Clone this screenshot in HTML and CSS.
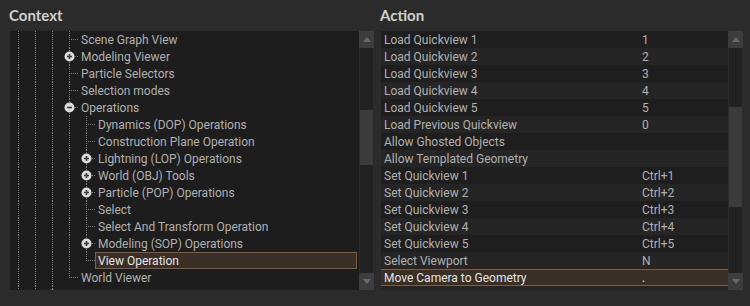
FILE: index.html
```html
<!DOCTYPE html>
<html lang="en">
<head>
    <meta charset="UTF-8">
    <title>Hotkeys - Context / Action</title>
    <link rel="stylesheet" href="styles.css">
</head>
<body>

<div class="panes">

    <!-- Context tree -->
    <section class="pane pane-context">
        <h2 class="pane-title">Context</h2>
        <div class="box">
            <div class="tree">
                <div class="row"><span class="g g-line"></span><span class="g g-line"></span><span class="g g-line"></span><span class="g g-tee"></span><span class="label">Scene Graph View</span></div>
                <div class="row"><span class="g g-line"></span><span class="g g-line"></span><span class="g g-line"></span><span class="g g-tee"><svg class="toggle" viewBox="0 0 11 11"><circle cx="5.5" cy="5.5" r="5" fill="#dcdcdc"/><path d="M3 5.5h5M5.5 3v5" stroke="#3a3a3a" stroke-width="1.6"/></svg></span><span class="label">Modeling Viewer</span></div>
                <div class="row"><span class="g g-line"></span><span class="g g-line"></span><span class="g g-line"></span><span class="g g-tee"></span><span class="label">Particle Selectors</span></div>
                <div class="row"><span class="g g-line"></span><span class="g g-line"></span><span class="g g-line"></span><span class="g g-tee"></span><span class="label">Selection modes</span></div>
                <div class="row"><span class="g g-line"></span><span class="g g-line"></span><span class="g g-line"></span><span class="g g-tee"><svg class="toggle" viewBox="0 0 11 11"><circle cx="5.5" cy="5.5" r="5" fill="#dcdcdc"/><path d="M3 5.5h5" stroke="#3a3a3a" stroke-width="1.6"/></svg></span><span class="label">Operations</span></div>
                <div class="row"><span class="g g-line"></span><span class="g g-line"></span><span class="g g-line"></span><span class="g g-line"></span><span class="g g-tee"></span><span class="label">Dynamics (DOP) Operations</span></div>
                <div class="row"><span class="g g-line"></span><span class="g g-line"></span><span class="g g-line"></span><span class="g g-line"></span><span class="g g-tee"></span><span class="label">Construction Plane Operation</span></div>
                <div class="row"><span class="g g-line"></span><span class="g g-line"></span><span class="g g-line"></span><span class="g g-line"></span><span class="g g-tee"><svg class="toggle" viewBox="0 0 11 11"><circle cx="5.5" cy="5.5" r="5" fill="#dcdcdc"/><path d="M3 5.5h5M5.5 3v5" stroke="#3a3a3a" stroke-width="1.6"/></svg></span><span class="label">Lightning (LOP) Operations</span></div>
                <div class="row"><span class="g g-line"></span><span class="g g-line"></span><span class="g g-line"></span><span class="g g-line"></span><span class="g g-tee"><svg class="toggle" viewBox="0 0 11 11"><circle cx="5.5" cy="5.5" r="5" fill="#dcdcdc"/><path d="M3 5.5h5M5.5 3v5" stroke="#3a3a3a" stroke-width="1.6"/></svg></span><span class="label">World (OBJ) Tools</span></div>
                <div class="row"><span class="g g-line"></span><span class="g g-line"></span><span class="g g-line"></span><span class="g g-line"></span><span class="g g-tee"><svg class="toggle" viewBox="0 0 11 11"><circle cx="5.5" cy="5.5" r="5" fill="#dcdcdc"/><path d="M3 5.5h5M5.5 3v5" stroke="#3a3a3a" stroke-width="1.6"/></svg></span><span class="label">Particle (POP) Operations</span></div>
                <div class="row"><span class="g g-line"></span><span class="g g-line"></span><span class="g g-line"></span><span class="g g-line"></span><span class="g g-tee"></span><span class="label">Select</span></div>
                <div class="row"><span class="g g-line"></span><span class="g g-line"></span><span class="g g-line"></span><span class="g g-line"></span><span class="g g-tee"></span><span class="label">Select And Transform Operation</span></div>
                <div class="row"><span class="g g-line"></span><span class="g g-line"></span><span class="g g-line"></span><span class="g g-line"></span><span class="g g-tee"><svg class="toggle" viewBox="0 0 11 11"><circle cx="5.5" cy="5.5" r="5" fill="#dcdcdc"/><path d="M3 5.5h5M5.5 3v5" stroke="#3a3a3a" stroke-width="1.6"/></svg></span><span class="label">Modeling (SOP) Operations</span></div>
                <div class="row"><span class="g g-line"></span><span class="g g-line"></span><span class="g g-line"></span><span class="g g-line"></span><span class="g g-end"></span><span class="label selected">View Operation</span></div>
                <div class="row"><span class="g g-line"></span><span class="g g-line"></span><span class="g g-line"></span><span class="g g-end"></span><span class="label">World Viewer</span></div>
                <div class="row"><span class="g g-line"></span><span class="g g-line"></span><span class="g g-tee"><svg class="toggle" viewBox="0 0 11 11"><circle cx="5.5" cy="5.5" r="5" fill="#dcdcdc"/><path d="M3 5.5h5M5.5 3v5" stroke="#3a3a3a" stroke-width="1.6"/></svg></span><span class="label">Lop Viewer</span></div>
            </div>
            <div class="scrollbar">
                <div class="sb-btn"><span class="arrow-up"></span></div>
                <div class="sb-track">
                    <div class="sb-gap ctx-before"></div>
                    <div class="sb-thumb ctx-thumb"></div>
                    <div class="sb-gap sb-rest"></div>
                </div>
                <div class="sb-btn"><span class="arrow-down"></span></div>
            </div>
        </div>
    </section>

    <!-- Action list -->
    <section class="pane pane-action">
        <h2 class="pane-title">Action</h2>
        <div class="box">
            <div class="list">
                <div class="item"><span class="name">Load Quickview 1</span><span class="key">1</span></div>
                <div class="item"><span class="name">Load Quickview 2</span><span class="key">2</span></div>
                <div class="item"><span class="name">Load Quickview 3</span><span class="key">3</span></div>
                <div class="item"><span class="name">Load Quickview 4</span><span class="key">4</span></div>
                <div class="item"><span class="name">Load Quickview 5</span><span class="key">5</span></div>
                <div class="item"><span class="name">Load Previous Quickview</span><span class="key">0</span></div>
                <div class="item"><span class="name">Allow Ghosted Objects</span><span class="key"></span></div>
                <div class="item"><span class="name">Allow Templated Geometry</span><span class="key"></span></div>
                <div class="item"><span class="name">Set Quickview 1</span><span class="key">Ctrl+1</span></div>
                <div class="item"><span class="name">Set Quickview 2</span><span class="key">Ctrl+2</span></div>
                <div class="item"><span class="name">Set Quickview 3</span><span class="key">Ctrl+3</span></div>
                <div class="item"><span class="name">Set Quickview 4</span><span class="key">Ctrl+4</span></div>
                <div class="item"><span class="name">Set Quickview 5</span><span class="key">Ctrl+5</span></div>
                <div class="item"><span class="name">Select Viewport</span><span class="key">N</span></div>
                <div class="item selected"><span class="name">Move Camera to Geometry</span><span class="key">.</span></div>
                <div class="item"><span class="name">Set Pivot</span><span class="key"></span></div>
            </div>
            <div class="scrollbar">
                <div class="sb-btn"><span class="arrow-up"></span></div>
                <div class="sb-track">
                    <div class="sb-gap act-before"></div>
                    <div class="sb-thumb act-thumb"></div>
                    <div class="sb-gap sb-rest"></div>
                </div>
                <div class="sb-btn"><span class="arrow-down"></span></div>
            </div>
        </div>
    </section>

</div>

</body>
</html>
```

FILE: styles.css
```css
body {
    margin: 0;
    width: 750px;
    height: 306px;
    overflow: hidden;
    background: #2b2b2b;
    font-family: Roboto, 'Noto Sans', sans-serif;
    font-size: 12px;
    color: #b0b0b0;
}

.panes {
    display: grid;
    grid-template-columns: 375px 375px;
}
.pane-context {
    padding-left: 10px;
}
.pane-action {
    padding-left: 6px;
}
.pane-title {
    margin: 0 0 0 -1px;
    height: 31px;
    line-height: 30px;
    font-family: Lato, 'Noto Sans', sans-serif;
    font-size: 15px;
    font-weight: bold;
    color: #d0d0d0;
}

.box {
    display: flex;
    height: 259px;
    background: #1d1d1d;
}
.pane-context .box {
    width: 364px;
}
.pane-action .box {
    width: 362px;
}

/* Tree */
.tree {
    flex: 1;
    overflow: hidden;
}
.row {
    display: flex;
    height: 17px;
    line-height: 18px;
    white-space: nowrap;
}
.g {
    flex: none;
    width: 17px;
    height: 17px;
    display: flex;
    align-items: center;
    justify-content: center;
}
.g-line {
    background: repeating-linear-gradient(to bottom, #7a7a7a 0 1px, transparent 1px 2px) 8px 0 / 1px 100% no-repeat;
}
.g-tee {
    background:
        repeating-linear-gradient(to bottom, #7a7a7a 0 1px, transparent 1px 2px) 8px 0 / 1px 100% no-repeat,
        repeating-linear-gradient(to right, #7a7a7a 0 1px, transparent 1px 2px) 10px 8px / 7px 1px no-repeat;
}
.g-end {
    background:
        repeating-linear-gradient(to bottom, #7a7a7a 0 1px, transparent 1px 2px) 8px 0 / 1px 9px no-repeat,
        repeating-linear-gradient(to right, #7a7a7a 0 1px, transparent 1px 2px) 10px 8px / 7px 1px no-repeat;
}
.toggle {
    width: 11px;
    height: 11px;
    margin-left: -1px;
}
.label {
    padding-left: 3px;
}
.label.selected {
    flex: 1;
    margin-right: 2px;
    box-sizing: border-box;
    line-height: 16px;
    background: #3a2f27;
    border: 1px solid #7e5f3f;
    padding-left: 2px;
    color: #e4e4e4;
}

/* List */
.list {
    flex: 1;
    overflow: hidden;
}
.item {
    display: flex;
    height: 17px;
    line-height: 18px;
    padding-left: 3px;
    background: #1e1e1e;
    white-space: nowrap;
}
.item:nth-child(even) {
    background: #252525;
}
.item .name {
    width: 258px;
}
.item.selected {
    background: #3a2f27;
    border-top: 1px solid #7e5f3f;
    border-bottom: 1px solid #7e5f3f;
    line-height: 16px;
    box-sizing: border-box;
    color: #e4e4e4;
}

/* Scrollbars */
.scrollbar {
    flex: none;
    width: 15px;
    display: flex;
    flex-direction: column;
    background: #2b2b2b;
}
.sb-btn {
    height: 17px;
    background: #3d3d3d;
    display: flex;
    align-items: center;
    justify-content: center;
}
.sb-track {
    flex: 1;
    display: flex;
    flex-direction: column;
    padding: 0 1px;
}
.sb-gap {
    background: #222222;
}
.sb-rest {
    flex: 1;
}
.sb-thumb {
    background: #3b3b3b;
}
.ctx-before { height: 62px; }
.ctx-thumb { height: 55px; }
.act-before { height: 59px; }
.act-thumb { height: 100px; }

.arrow-up, .arrow-down {
    width: 0;
    height: 0;
    border-left: 4px solid transparent;
    border-right: 4px solid transparent;
}
.arrow-up {
    border-bottom: 5px solid #6a6a6a;
}
.arrow-down {
    border-top: 5px solid #6a6a6a;
}
```
